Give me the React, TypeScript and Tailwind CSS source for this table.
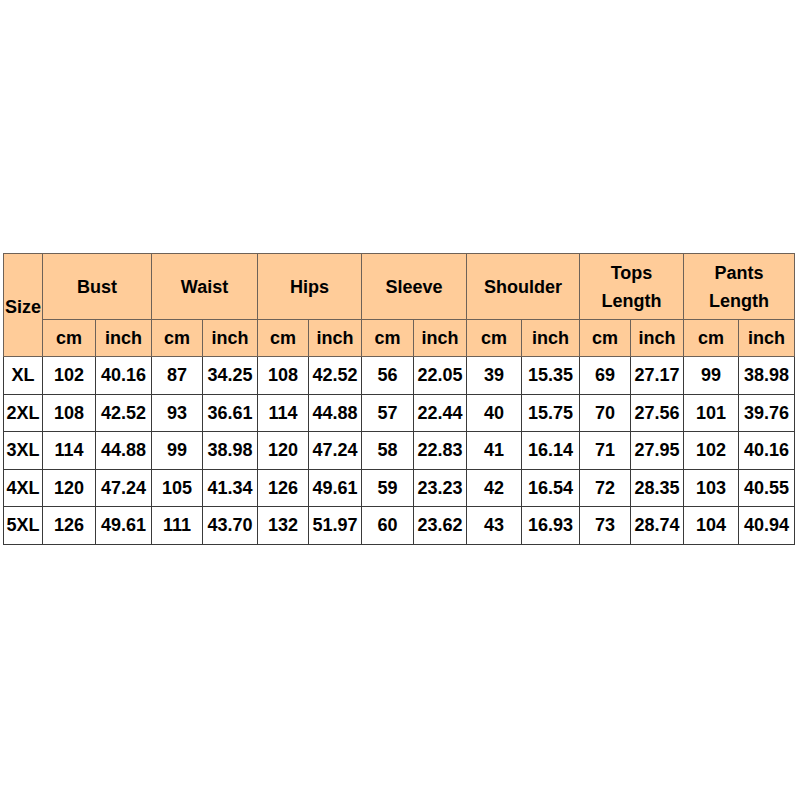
import React from "react";

const widths = [39, 53, 56, 51, 55, 51, 53, 52, 53, 55, 58, 51, 53, 55, 56];

const groups: { label: React.ReactNode }[] = [
  { label: "Bust" },
  { label: "Waist" },
  { label: "Hips" },
  { label: "Sleeve" },
  { label: "Shoulder" },
  { label: (<>Tops<br />Length</>) },
  { label: (<>Pants<br />Length</>) },
];

const rows: string[][] = [
  ["XL", "102", "40.16", "87", "34.25", "108", "42.52", "56", "22.05", "39", "15.35", "69", "27.17", "99", "38.98"],
  ["2XL", "108", "42.52", "93", "36.61", "114", "44.88", "57", "22.44", "40", "15.75", "70", "27.56", "101", "39.76"],
  ["3XL", "114", "44.88", "99", "38.98", "120", "47.24", "58", "22.83", "41", "16.14", "71", "27.95", "102", "40.16"],
  ["4XL", "120", "47.24", "105", "41.34", "126", "49.61", "59", "23.23", "42", "16.54", "72", "28.35", "103", "40.55"],
  ["5XL", "126", "49.61", "111", "43.70", "132", "51.97", "60", "23.62", "43", "16.93", "73", "28.74", "104", "40.94"],
];

const rowHeights = [38, 37, 38, 37, 38];

export default function App() {
  return (
    <div className="min-h-[800px] w-[800px] bg-white pt-[253px] pl-[3px]" style={{ fontFamily: '"Liberation Sans", Arial, sans-serif' }}>
      <table className="table-fixed border-collapse text-[18px] font-bold text-black w-[791px]">
        <colgroup>
          {widths.map((w, i) => (
            <col key={i} style={{ width: w }} />
          ))}
        </colgroup>
        <thead>
          <tr className="h-[66px] bg-[#ffcc99]">
            <th rowSpan={2} className="border border-[#6e6258] p-0 text-center align-middle pt-[4px]">Size</th>
            {groups.map((g, i) => (
              <th key={i} colSpan={2} className="border border-[#6e6258] p-0 text-center align-middle leading-[28px]">
                {g.label}
              </th>
            ))}
          </tr>
          <tr className="h-[37px] bg-[#ffcc99]">
            {groups.map((_, i) => (
              <React.Fragment key={i}>
                <th className="border border-[#6e6258] p-0 text-center align-middle">cm</th>
                <th className="border border-[#6e6258] p-0 text-center align-middle">inch</th>
              </React.Fragment>
            ))}
          </tr>
        </thead>
        <tbody>
          {rows.map((r, ri) => (
            <tr key={ri} style={{ height: rowHeights[ri] }}>
              {r.map((c, ci) => (
                <td key={ci} className="border border-[#3a3a3a] p-0 text-center align-middle whitespace-nowrap">
                  {c}
                </td>
              ))}
            </tr>
          ))}
        </tbody>
      </table>
    </div>
  );
}
